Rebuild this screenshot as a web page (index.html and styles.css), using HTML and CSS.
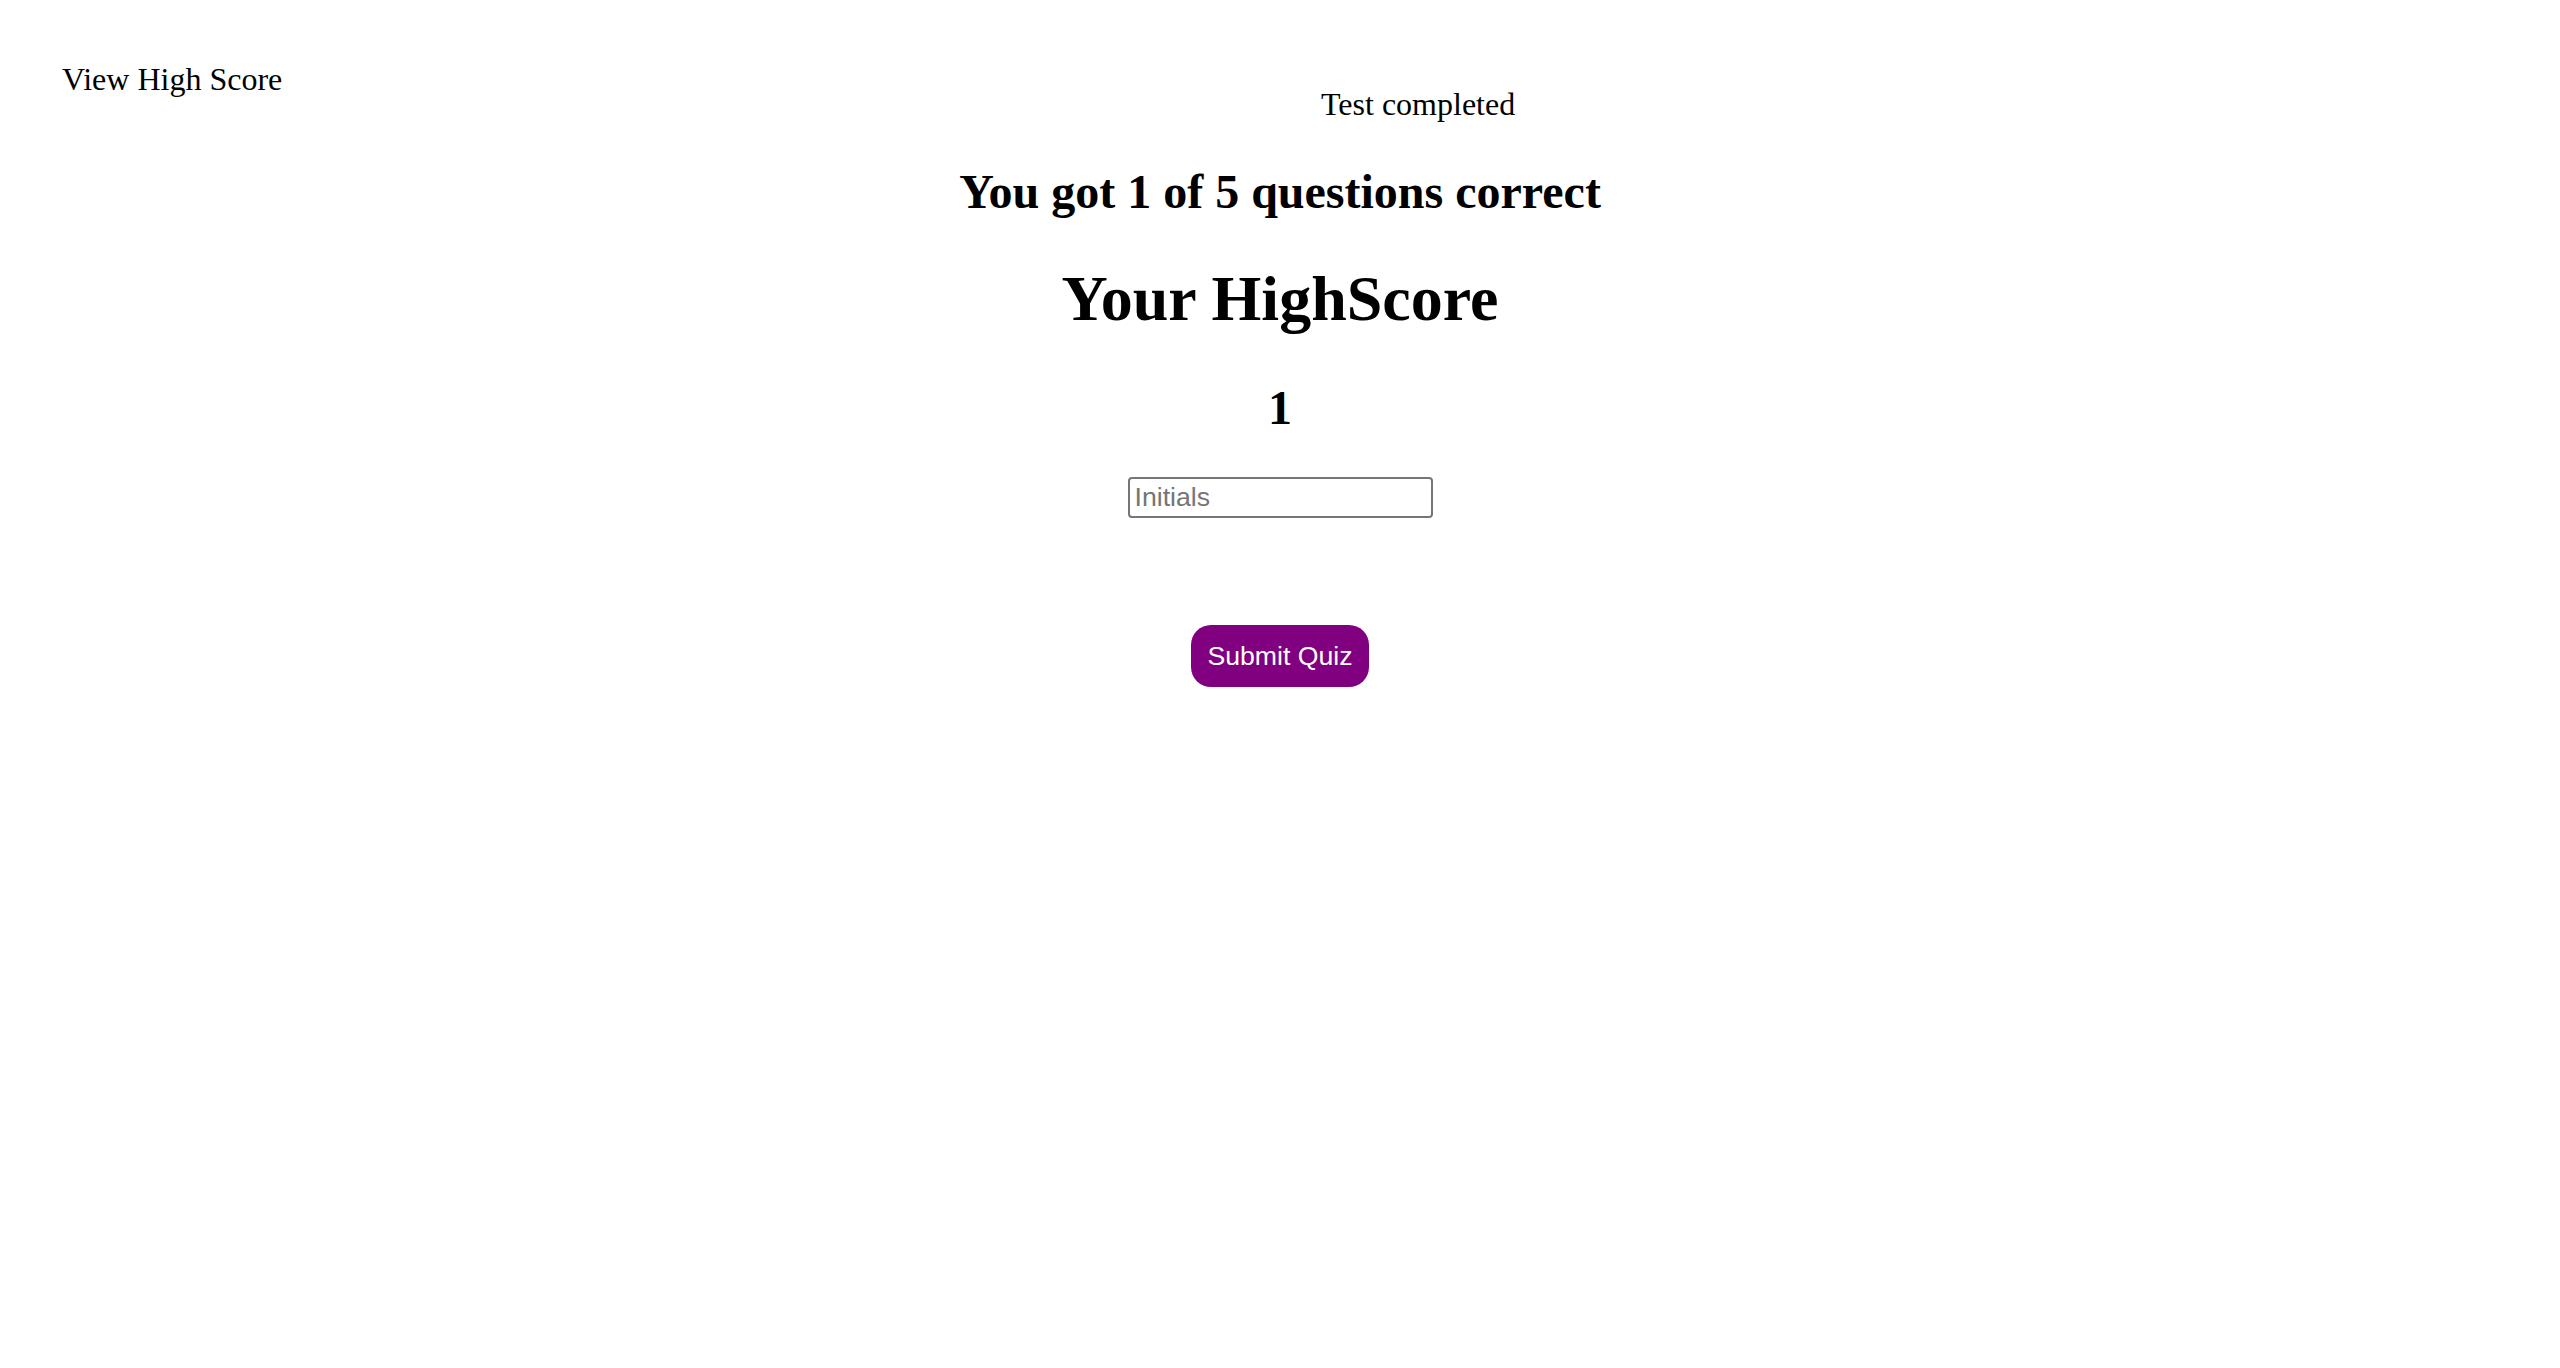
FILE: index.html
```html
<!DOCTYPE html>
<html lang="en">
<head>
<meta charset="utf-8">
<title>Quiz</title>
<link rel="stylesheet" href="styles.css">
</head>
<body>
  <header class="header">
    <a class="nav-link">View High Score</a>
    <div class="status">Test completed</div>
  </header>
  <main class="results">
    <h2 class="result-text">You got 1 of 5 questions correct</h2>
    <h1 class="score-title">Your HighScore</h1>
    <h2 class="score-value">1</h2>
    <div class="field-row">
      <input class="initials" type="text" placeholder="Initials">
    </div>
    <div class="button-row">
      <button class="submit-btn" type="button">Submit Quiz</button>
    </div>
  </main>
</body>
</html>
```
FILE: styles.css
```css
html, body {
  margin: 0;
  padding: 0;
  background: #ffffff;
}

body {
  font-family: "Liberation Serif", "Times New Roman", serif;
  color: #000000;
  font-size: 32px;
}

.header {
  display: flex;
  align-items: flex-start;
  padding-left: 62px;
}

.nav-link {
  margin-top: 61px;
  font-size: 32px;
  color: #000000;
  cursor: pointer;
}

.status {
  flex: 1;
  text-align: center;
  margin-top: 86px;
  margin-right: 6px;
  font-size: 32px;
}

.results {
  display: flex;
  flex-direction: column;
  align-items: center;
  text-align: center;
}

.result-text {
  font-size: 48px;
  font-weight: bold;
  margin: 41px 0 0;
}

.score-title {
  font-size: 64px;
  font-weight: bold;
  margin: 43px 0 0;
}

.score-value {
  font-size: 48px;
  font-weight: bold;
  margin: 44px 0 0;
}

.field-row {
  margin-top: 42px;
}

.initials {
  box-sizing: border-box;
  width: 305px;
  height: 41px;
  padding: 2px 5px;
  border: 2px solid #767676;
  border-radius: 4px;
  font-family: "Liberation Sans", Arial, sans-serif;
  font-size: 26.67px;
  color: #000000;
  background: #ffffff;
}

.initials::placeholder {
  color: #757575;
}

.button-row {
  margin-top: 107px;
}

.submit-btn {
  box-sizing: border-box;
  height: 62px;
  padding: 0 16px;
  border: none;
  border-radius: 20px;
  background: #800080;
  color: #ffffff;
  font-family: "Liberation Sans", Arial, sans-serif;
  font-size: 26.67px;
  cursor: pointer;
}
```
